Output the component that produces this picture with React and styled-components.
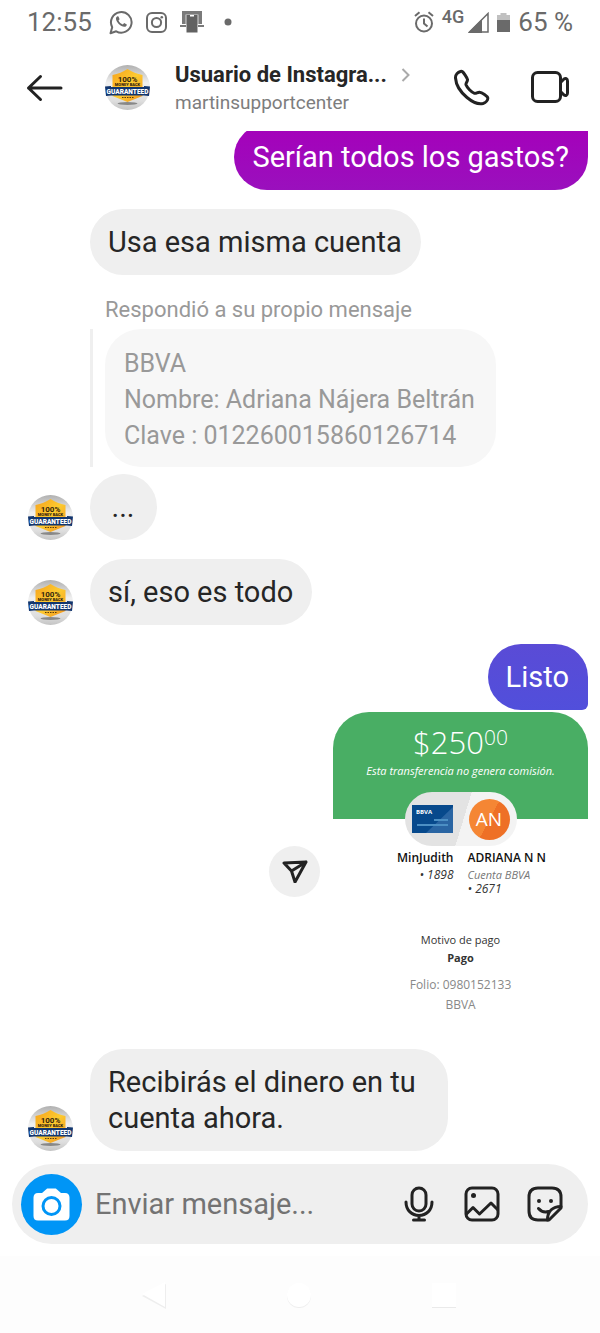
import React from 'react';
import styled, { createGlobalStyle } from 'styled-components';

const Global = createGlobalStyle`
  *, *::before, *::after { box-sizing: border-box; }
  body { margin: 0; background: #fff; font-family: Roboto, "Liberation Sans", sans-serif; color: #262626; }
  button, input { font: inherit; color: inherit; border: 0; background: none; padding: 0; margin: 0; }
  button { cursor: pointer; }
  svg { display: block; flex: none; }
  h1, p { margin: 0; }
`;

const Screen = styled.div`
  min-height: 100vh;
  display: flex;
  flex-direction: column;
`;

const StatusBar = styled.div`
  height: 44px;
  padding: 0 27px;
  display: flex;
  align-items: center;
  justify-content: space-between;
  color: #6a6a6a;
  font-size: 26px;
`;

const StatusGroup = styled.div`
  display: flex;
  align-items: center;
  gap: ${(p) => p.$gap}px;
`;

const Clock = styled.span`
  margin-right: 4px;
`;

const Network = styled.span`
  font-size: 18px;
  font-weight: 500;
  line-height: 20px;
  padding-bottom: 10px;
`;

const Header = styled.header`
  height: 87px;
  padding: 0 30px 0 26px;
  display: flex;
  align-items: center;
`;

const Peer = styled.a`
  flex: 1;
  min-width: 0;
  margin-left: 42px;
  display: flex;
  align-items: center;
  gap: 25px;
  color: inherit;
  text-decoration: none;
`;

const PeerText = styled.div`
  min-width: 0;
  flex: 1;
`;

const PeerName = styled.h1`
  display: flex;
  align-items: center;
  gap: 14px;
  font-size: 22px;
  line-height: 30px;
  font-weight: 700;
`;

const Handle = styled.p`
  font-size: 19px;
  line-height: 26px;
  color: #7d7d7d;
`;

const Actions = styled.div`
  display: flex;
  align-items: center;
  gap: 40px;
`;

const Thread = styled.main`
  flex: 1;
  display: flex;
  flex-direction: column;
  overflow: hidden;
  padding: 0 12px 13px 28px;
`;

const Row = styled.div`
  display: flex;
  align-items: ${(p) => p.$align || 'flex-end'};
  justify-content: ${(p) => (p.$mine ? 'flex-end' : 'flex-start')};
  gap: 17px;
  margin-top: ${(p) => p.$space ?? 19}px;
  padding-left: ${(p) => (p.$indent ? 62 : 0)}px;
`;

const Bubble = styled.p`
  min-width: 67px;
  max-width: 358px;
  padding: 15px 19px 15px 18px;
  border-radius: 33px;
  background: #efefef;
  font-size: 29px;
  line-height: 36px;
  text-align: ${(p) => (p.$center ? 'center' : 'left')};
`;

const MyBubble = styled(Bubble)`
  color: #fff;
  background: ${(p) => p.$tint};
  ${(p) => (p.$joins === 'above' ? 'border-top-right-radius: 6px;' : 'border-bottom-right-radius: 6px;')}
`;

const Reply = styled.section`
  margin: 23px 0 0 62px;
`;

const ReplyCaption = styled.p`
  padding-left: 15px;
  font-size: 22px;
  line-height: 24px;
  color: #999;
`;

const Quote = styled.blockquote`
  margin: 7px 0 0;
  padding-left: 12px;
  border-left: 3px solid #efefef;
  display: flex;
`;

const QuoteBubble = styled(Bubble)`
  max-width: none;
  padding: 17px 21px 13px 19px;
  background: #f7f7f7;
  color: #999;
  font-size: 25px;
  border-radius: 36px;
`;

const ShareButton = styled.button`
  width: 51px;
  height: 51px;
  border-radius: 50%;
  background: #efefef;
  display: grid;
  place-items: center;
`;

const Receipt = styled.article`
  width: 255px;
  min-height: 318px;
  margin-left: -4px;
  font-family: "Open Sans", "Noto Sans", sans-serif;
  text-align: center;
  font-size: 11px;
  line-height: 14px;
`;

const ReceiptTop = styled.div`
  height: 107px;
  padding-top: 12px;
  border-radius: 36px 36px 0 0;
  background: #49ae64;
  color: #fff;
`;

const Amount = styled.p`
  display: flex;
  justify-content: center;
  align-items: flex-start;
  font-size: 31px;
  line-height: 36px;
  font-weight: 300;
`;

const Cents = styled.span`
  font-size: 21px;
  line-height: 26px;
`;

const Fee = styled.p`
  margin-top: 4px;
  font-style: italic;
`;

const Pill = styled.div`
  width: 112px;
  height: 54px;
  margin: -27px auto 0;
  position: relative;
  border-radius: 27px;
  background: linear-gradient(107deg, #e3e3e3 0 52%, #f3f3f3 52%);
  display: flex;
  align-items: center;
  justify-content: space-between;
  padding: 0 7px;
`;

const Initials = styled.span`
  width: 41px;
  height: 41px;
  border-radius: 50%;
  background: linear-gradient(118deg, #f58634 0 50%, #ee7026 50%);
  color: #fff;
  font-size: 19px;
  line-height: 41px;
`;

const Parties = styled.div`
  margin-top: 5px;
  display: grid;
  grid-template-columns: 1fr 1fr;
  gap: 14px;
`;

const Party = styled.div`
  text-align: ${(p) => p.$side};
`;

const PartyName = styled.p`
  font-size: 12px;
  font-weight: 600;
  margin-bottom: 3px;
  white-space: nowrap;
  color: #111;
`;

const Detail = styled.p`
  font-size: ${(p) => (p.$soft ? 11 : 12)}px;
  font-style: italic;
  color: ${(p) => (p.$soft ? '#777' : '#333')};
`;

const Purpose = styled.div`
  margin-top: 35px;
  line-height: 18px;
  color: #333;
`;

const Folio = styled.div`
  margin-top: 8px;
  font-size: 12px;
  line-height: 20px;
  color: #888;
`;

const Composer = styled.form`
  height: 80px;
  margin: 0 12px;
  padding: 0 25px 0 9px;
  border-radius: 40px;
  background: #efefef;
  display: flex;
  align-items: center;
`;

const CameraButton = styled.button`
  width: 61px;
  height: 61px;
  border-radius: 50%;
  background: #0095f6;
  display: grid;
  place-items: center;
  flex: none;
`;

const MessageInput = styled.input`
  flex: 1;
  min-width: 0;
  height: 48px;
  margin-left: 13px;
  font-size: 29px;
  outline: 0;
  &::placeholder { color: #737373; opacity: 1; }
`;

const Tools = styled.div`
  display: flex;
  gap: 27px;
`;

const NavBar = styled.nav`
  height: 77px;
  margin-top: 12px;
  padding: 0 143px 0 141px;
  background: #fdfdfd;
  display: flex;
  align-items: center;
  justify-content: space-between;
`;

function Seal() {
  return (
    <svg width="45" height="45" viewBox="0 0 45 45" role="img" aria-label="Foto de perfil">
      <defs>
        <linearGradient id="rim" x1="0" y1="0" x2="0" y2="1">
          <stop offset="0" stopColor="#b0b0b0" />
          <stop offset=".4" stopColor="#f0f0f0" />
          <stop offset=".8" stopColor="#dedede" />
          <stop offset="1" stopColor="#c4c4c4" />
        </linearGradient>
        <linearGradient id="gold" x1="0" y1="0" x2="1" y2="1">
          <stop offset="0" stopColor="#f6a21c" />
          <stop offset=".5" stopColor="#fdcb30" />
          <stop offset="1" stopColor="#f2921d" />
        </linearGradient>
      </defs>
      <circle cx="22.500" cy="22.500" r="22.500" fill="url(#rim)" />
      <ellipse cx="22.500" cy="38.500" rx="10" ry="1.500" fill="#888" />
      <path d="M22.500 4 C27 7 32 9 37.500 10 V31 L30 34 L22.500 37 L15 34 L7.500 31 V10 C13 9 18 7 22.500 4 Z" fill="url(#gold)" />
      <text x="22.500" y="17" textAnchor="middle" fontSize="8" fontWeight="700" fill="#33230c">100%</text>
      <text x="22.500" y="21" textAnchor="middle" fontSize="4" fontWeight="900" fill="#33230c">MONEY BACK</text>
      <path d="M0 21.500 L6 21 V22 H39 V21 L45 21.500 L44 31 L39 30.500 H6 L1 31 Z" fill="#12366f" />
      <text x="22.500" y="29" textAnchor="middle" fontSize="6.500" fontWeight="900" fill="#fff">GUARANTEED</text>
      <path d="M17 32.500 H29" stroke="#5b3d0c" strokeWidth="1.200" strokeDasharray="1.500 1" />
    </svg>
  );
}

const line = { fill: 'none', stroke: '#222', strokeWidth: 3, strokeLinecap: 'round', strokeLinejoin: 'round' };

const WhatsApp = () => (
  <svg width="24" height="25" viewBox="0 0 24 25" fill="none" stroke="#6a6a6a" strokeWidth="2">
    <path d="M1.500 23.200 L3.200 17.200 A10.300 10.300 0 1 1 7.200 21.300 Z" strokeLinejoin="round" />
    <path d="M8.300 6.300 C6.500 7.200 6.600 9.600 8 11.700 C9.800 14.500 12.400 16.600 15 16.800 C17 16.900 18 15.500 17.800 14.400 L15.200 13.100 L13.800 14.600 C12 14 10.200 12.200 9.500 10.600 L10.600 9.200 L9.500 6.400 Z" fill="#6a6a6a" stroke="none" />
  </svg>
);

const Instagram = () => (
  <svg width="21" height="21" viewBox="0 0 21 21" fill="none" stroke="#6a6a6a" strokeWidth="2">
    <rect x="1" y="1" width="19" height="19" rx="5" />
    <circle cx="10.500" cy="10.500" r="4.600" />
    <circle cx="15.800" cy="5.200" r="1.300" fill="#6a6a6a" stroke="none" />
  </svg>
);

const Terminal = () => (
  <svg width="24" height="22" viewBox="0 0 24 22">
    <path d="M2 0 H22 V13 H2 Z M0 14 H6 V16 H0 Z M18 14 H24 V16 H18 Z" fill="#7a7a7a" />
    <path d="M5.500 3.500 H18.500 V13 H5.500 Z" fill="#d8d8d8" />
    <rect x="6.500" y="4" width="11" height="17.500" fill="#626262" />
    <rect x="10" y="4" width="4" height="1.500" fill="#fff" />
  </svg>
);

const Alarm = () => (
  <svg width="20" height="22" viewBox="0 0 20 22" fill="none" stroke="#6a6a6a" strokeWidth="2">
    <circle cx="10" cy="12.500" r="8" />
    <path d="M10 7.500 V12.500 L13.500 15.500 M1 5 L5.500 1.200 M19 5 L14.500 1.200" />
  </svg>
);

const Signal = () => (
  <svg width="21" height="21" viewBox="0 0 21 21">
    <path d="M1.500 20 L20 1.500 V20 Z" fill="none" stroke="#6a6a6a" strokeWidth="1.500" />
    <path d="M0 21 L14 7 V21 Z" fill="#6a6a6a" />
  </svg>
);

const Battery = () => (
  <svg width="13" height="21" viewBox="0 0 13 21">
    <path d="M0 3 H3.500 V1 H9.500 V3 H13 V8 H0 Z" fill="#c0c0c0" />
    <rect y="8" width="13" height="12" fill="#6a6a6a" />
  </svg>
);

export default function App() {
  return (
    <Screen>
      <Global />
      <StatusBar>
        <StatusGroup $gap={13}>
          <Clock>12:55</Clock>
          <WhatsApp />
          <Instagram />
          <Terminal />
          <svg width="22" height="8" viewBox="0 0 22 8"><circle cx="11" cy="4" r="3.500" fill="#6a6a6a" /></svg>
        </StatusGroup>
        <StatusGroup $gap={8}>
          <Alarm />
          <StatusGroup $gap={4}>
            <Network>4G</Network>
            <Signal />
          </StatusGroup>
          <Battery />
          <span>65 %</span>
        </StatusGroup>
      </StatusBar>

      <Header>
        <button type="button" aria-label="Atrás">
          <svg width="37" height="28" viewBox="0 0 37 28" {...line}><path d="M35 14 H2.500 M14.500 2.500 L2.500 14 L14.500 25.500" /></svg>
        </button>
        <Peer href="#perfil">
          <Seal />
          <PeerText>
            <PeerName>
              <span>Usuario de Instagra...</span>
              <svg width="9" height="14" viewBox="0 0 9 14" fill="none" stroke="#aaa" strokeWidth="2"><path d="M1.500 1 L7.500 7 L1.500 13" /></svg>
            </PeerName>
            <Handle>martinsupportcenter</Handle>
          </PeerText>
        </Peer>
        <Actions>
          <button type="button" aria-label="Llamar">
            <svg width="37" height="37" viewBox="0 0 37 37" {...line}>
              <path d="M7.500 2.500 C5 3.200 2.200 5.500 2.500 9 C3 16 8 23.500 14 28.500 C20 33.500 26 35.500 30 34.500 C33 33.500 35 31 34.800 29 C34.500 27 29 23.500 26.500 23.300 C24.500 23.200 23 24.800 21.500 24.300 C18.500 23.300 14 18.500 13 15.800 C12.500 14.200 14.800 12.500 14.500 10.500 C14 8.500 10.500 3.300 9.300 2.600 C8.800 2.300 8.200 2.300 7.500 2.500 Z" />
            </svg>
          </button>
          <button type="button" aria-label="Videollamada">
            <svg width="40" height="34" viewBox="0 0 40 34" {...line}>
              <rect x="2.500" y="1.500" width="28" height="29" rx="5" />
              <path d="M31 11 L34 8 C35.500 7 37.500 7.500 37.500 10 V22 C37.500 24.500 35.500 25 34 24 L31 21" />
            </svg>
          </button>
        </Actions>
      </Header>

      <Thread>
        <Row $mine $space={-7}>
          <MyBubble $joins="above" $tint="linear-gradient(#a500ba, #9a10bd)">Serían todos los gastos?</MyBubble>
        </Row>
        <Row $indent><Bubble>Usa esa misma cuenta</Bubble></Row>
        <Reply>
          <ReplyCaption>Respondió a su propio mensaje</ReplyCaption>
          <Quote>
            <QuoteBubble as="div">
              <p>BBVA</p>
              <p>Nombre: Adriana Nájera Beltrán</p>
              <p>Clave : 012260015860126714</p>
            </QuoteBubble>
          </Quote>
        </Reply>
        <Row $space={7}><Seal /><Bubble $center>...</Bubble></Row>
        <Row><Seal /><Bubble>sí, eso es todo</Bubble></Row>
        <Row $mine><MyBubble $tint="linear-gradient(#5a4bd6, #514fdb)">Listo</MyBubble></Row>
        <Row $mine $align="center" $space={2}>
          <ShareButton type="button" aria-label="Reenviar">
            <svg width="26" height="24" viewBox="0 0 26 24" {...line}>
              <path d="M2 4 L24 3 L13 23 L9.500 12 Z M9.500 12 L24 3" />
            </svg>
          </ShareButton>
          <Receipt>
            <ReceiptTop>
              <Amount>$250<Cents>00</Cents></Amount>
              <Fee>Esta transferencia no genera comisión.</Fee>
            </ReceiptTop>
            <Pill>
              <svg width="41" height="28" viewBox="0 0 41 28">
                <rect width="41" height="28" fill="#07498c" />
                <path d="M14 28 L41 2 V28 Z" fill="#2a65a3" />
                <path d="M5 20 H36 M22 15 H36" stroke="#4c8fc4" strokeWidth="2" />
                <text x="4" y="9" fontSize="6" fontWeight="700" fill="#fff">BBVA</text>
              </svg>
              <Initials>AN</Initials>
            </Pill>
            <Parties>
              <Party $side="right">
                <PartyName>MinJudith</PartyName>
                <Detail>• 1898</Detail>
              </Party>
              <Party $side="left">
                <PartyName>ADRIANA N N</PartyName>
                <Detail $soft>Cuenta BBVA</Detail>
                <Detail>• 2671</Detail>
              </Party>
            </Parties>
            <Purpose>
              <p>Motivo de pago</p>
              <strong>Pago</strong>
            </Purpose>
            <Folio>
              <p>Folio: 0980152133</p>
              <p>BBVA</p>
            </Folio>
          </Receipt>
        </Row>
        <Row><Seal /><Bubble>Recibirás el dinero en tu cuenta ahora.</Bubble></Row>
      </Thread>

      <Composer>
        <CameraButton type="button" aria-label="Cámara">
          <svg width="37" height="33" viewBox="0 0 37 33">
            <path d="M5 5 H9 L13 1.500 C13.500 1 14 .5 15 .5 H22 C23 .5 23.500 1 24 1.500 L28 5 H32 C35 5 36.500 7 36.500 9.500 V28 C36.500 31 35 32.500 32 32.500 H5 C2 32.500 .5 31 .5 28 V9.500 C.5 7 2 5 5 5 Z" fill="#fff" />
            <circle cx="18.500" cy="18" r="8.500" fill="#fff" stroke="#0095f6" strokeWidth="3" />
          </svg>
        </CameraButton>
        <MessageInput type="text" aria-label="Mensaje" placeholder="Enviar mensaje..." />
        <Tools>
          <button type="button" aria-label="Mensaje de voz">
            <svg width="36" height="36" viewBox="0 0 36 36" {...line}>
              <rect x="11" y="2" width="14" height="23" rx="7" />
              <path d="M5 16 C5 24.500 11 29.500 18 29.500 S31 24.500 31 16 M18 29.500 V34 M12.500 34 H23.500" />
            </svg>
          </button>
          <button type="button" aria-label="Galería">
            <svg width="36" height="36" viewBox="0 0 36 36" {...line}>
              <rect x="2" y="2" width="32" height="32" rx="6" />
              <path d="M2.500 28 L9 21.500 L15.500 28 L27 17 L33.500 23.500" />
              <circle cx="9.500" cy="9.500" r="2.500" fill="#222" stroke="none" />
            </svg>
          </button>
          <button type="button" aria-label="Stickers">
            <svg width="36" height="36" viewBox="0 0 36 36" {...line}>
              <path d="M11 2 H25 C31 2 34 5 34 11 V22 L22 34 H11 C5 34 2 31 2 25 V11 C2 5 5 2 11 2 Z" />
              <path d="M34 20.500 C26 20.500 20.500 25 20.500 34 M11.500 22.500 C14 25.500 18 26.500 21.500 25.500" />
              <circle cx="12" cy="15" r="2" fill="#222" stroke="none" />
              <circle cx="24" cy="15" r="2" fill="#222" stroke="none" />
            </svg>
          </button>
        </Tools>
      </Composer>

      <NavBar aria-label="Sistema">
        <button type="button" aria-label="Volver">
          <svg width="26" height="28" viewBox="0 0 26 28"><path d="M1 15 L25 28 V3 Z" fill="#eee" /><path d="M1 13 L24 26 V1 Z" fill="#fff" /></svg>
        </button>
        <button type="button" aria-label="Inicio">
          <svg width="26" height="28" viewBox="0 0 26 28"><circle cx="13" cy="15" r="12" fill="#eee" /><circle cx="13" cy="14" r="12" fill="#fff" /></svg>
        </button>
        <button type="button" aria-label="Recientes">
          <svg width="26" height="28" viewBox="0 0 26 28"><rect x="1" y="3" width="24" height="24" fill="#eaeaea" /><rect x="1" y="2" width="24" height="24" fill="#fff" /></svg>
        </button>
      </NavBar>
    </Screen>
  );
}
